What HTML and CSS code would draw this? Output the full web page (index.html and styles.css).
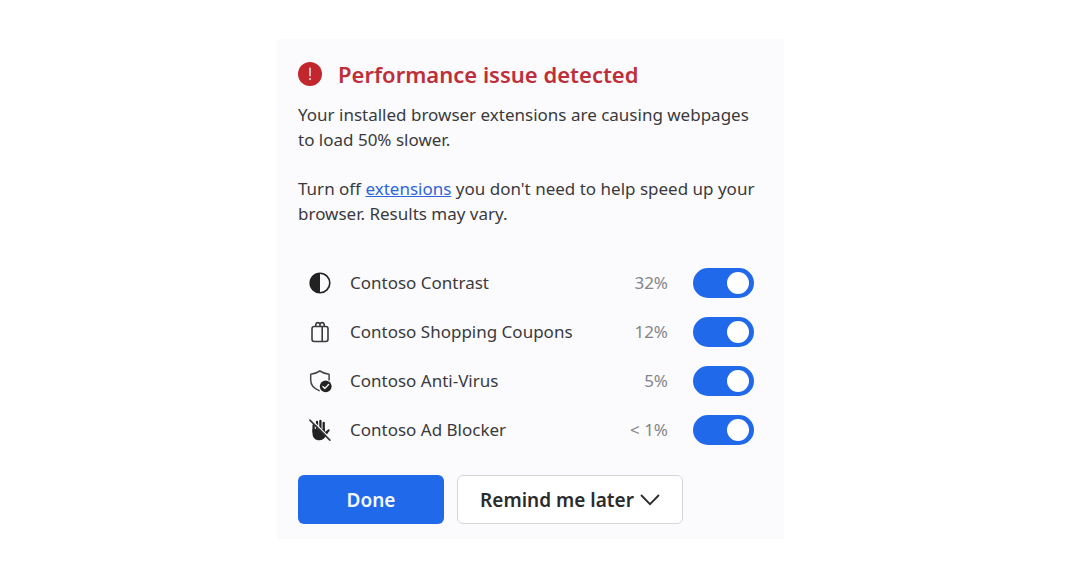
FILE: index.html
```html
<!DOCTYPE html>
<html lang="en">
<head>
<meta charset="utf-8">
<meta name="viewport" content="width=device-width, initial-scale=1">
<title>Performance issue detected</title>
<link rel="stylesheet" href="styles.css">
</head>
<body>
<main class="card">
  <header class="heading">
    <svg class="alert" viewBox="0 0 24 24" aria-hidden="true"><circle cx="12" cy="12" r="12" fill="#c1272d"/><path d="M12 6.3v7.4" stroke="#fbd9dc" stroke-width="1.6" stroke-linecap="round"/><circle cx="12" cy="17" r="1.1" fill="#fbd9dc"/></svg>
    <h1 class="title">Performance issue detected</h1>
  </header>
  <div class="copy">
    <p class="text">Your installed browser extensions are causing webpages<br>to load 50% slower.</p>
    <p class="text">Turn off <a class="link" href="#extensions">extensions</a> you don't need to help speed up your<br>browser. Results may vary.</p>
  </div>
  <ul class="list" id="extensions">
    <li class="row">
      <svg class="icon" viewBox="0 0 24 24" aria-hidden="true"><circle cx="12" cy="12" r="9.8" fill="none" stroke="#222" stroke-width="1.6"/><path d="M12 2.2a9.8 9.8 0 0 0 0 19.6z" fill="#222"/></svg>
      <label class="name" for="contrast">Contoso Contrast</label>
      <span class="share">32%</span>
      <input class="toggle" type="checkbox" role="switch" id="contrast" checked>
    </li>
    <li class="row">
      <svg class="icon" viewBox="0 0 24 24" fill="none" stroke="#3a3a3a" stroke-width="1.6" aria-hidden="true"><rect x="4" y="6.5" width="16" height="15" rx="2.2"/><path d="M7.8 6.5V4.2a2.2 2.2 0 0 1 4.2 0 2.2 2.2 0 0 1 4.2 0v2.3M12 4v2.5M14.2 6.5v15"/></svg>
      <label class="name" for="coupons">Contoso Shopping Coupons</label>
      <span class="share">12%</span>
      <input class="toggle" type="checkbox" role="switch" id="coupons" checked>
    </li>
    <li class="row">
      <svg class="icon" viewBox="0 0 24 24" aria-hidden="true"><path d="M11.2 21.6C5.8 19.5 2.7 16 2.7 11V5.2C5.8 5.1 8.8 4 11.9 2c3.1 2 6.1 3.1 9.2 3.2V11" fill="none" stroke="#444" stroke-width="1.5" stroke-linecap="round" stroke-linejoin="round"/><circle cx="17.7" cy="17.3" r="5.9" fill="#222"/><path d="m14.9 17.6 1.9 1.8 3.8-3.8" fill="none" stroke="#eee" stroke-width="1.4" stroke-linecap="round" stroke-linejoin="round"/></svg>
      <label class="name" for="antivirus">Contoso Anti-Virus</label>
      <span class="share">5%</span>
      <input class="toggle" type="checkbox" role="switch" id="antivirus" checked>
    </li>
    <li class="row">
      <svg class="icon" viewBox="0 0 24 24" aria-hidden="true"><g fill="none" stroke="#222" stroke-width="2.3" stroke-linecap="round"><path d="M5.6 7.5V14M9 4v9M12.4 2.8V13M15.7 4.8V14"/></g><path d="M4.5 11h12.4v3l3.3-2.6c1-.7 2 .3 1.4 1.2l-4.2 6.2c-1.5 2.2-3.2 3.4-6 3.4-4.5 0-6.9-2.7-6.9-7z" fill="#222"/><path d="m3 1.3 20 20" stroke="#fbfbfe" stroke-width="1.3"/><path d="m1.9 2.1 20 20" stroke="#333" stroke-width="1.6" stroke-linecap="round"/></svg>
      <label class="name" for="adblocker">Contoso Ad Blocker</label>
      <span class="share">&lt; 1%</span>
      <input class="toggle" type="checkbox" role="switch" id="adblocker" checked>
    </li>
  </ul>
  <footer class="actions">
    <button class="button primary" type="button">Done</button>
    <button class="button secondary" type="button">Remind me later
      <svg class="chevron" viewBox="0 0 20 12" aria-hidden="true"><path d="m1.5 1.5 8.5 8.7 8.5-8.7" fill="none" stroke="#2b2b2b" stroke-width="1.8" stroke-linecap="round"/></svg>
    </button>
  </footer>
</main>
</body>
</html>
```
FILE: styles.css
```css
* {
  box-sizing: border-box;
}

body {
  margin: 0;
  padding: 39px 8px 39px 0;
  background: #fff;
  color: #3a3a3c;
  font-family: "Noto Sans", "Open Sans", sans-serif;
  font-size: 17px;
}

.card {
  max-width: 507px;
  margin: 0 auto;
  padding: 20px 20px 15px 21px;
  background: #fbfbfe;
}

.heading {
  display: flex;
  align-items: center;
  gap: 16px;
}

.alert {
  width: 24px;
  height: 24px;
}

.title {
  margin: 0;
  color: #bd303a;
  font-size: 22px;
  font-weight: 600;
  line-height: 30px;
}

.copy {
  display: grid;
  gap: 24px;
  margin-top: 13px;
}

.text {
  margin: 0;
  line-height: 25px;
  white-space: nowrap;
}

.link {
  color: #2e66d9;
}

.list {
  margin: 32px 0 0;
  padding: 0 10px;
  list-style: none;
}

.row {
  display: flex;
  align-items: center;
  height: 49px;
}

.icon {
  width: 24px;
  height: 24px;
  margin-right: 18px;
}

.name {
  flex: 1;
}

.share {
  margin-right: 25px;
  color: #858589;
}

.toggle {
  display: flex;
  align-items: center;
  justify-content: flex-end;
  width: 61px;
  height: 30px;
  margin: 0;
  padding-right: 5px;
  border-radius: 15px;
  background: #2169eb;
  appearance: none;
}

.toggle::before {
  width: 22px;
  height: 22px;
  border-radius: 50%;
  background: #fff;
  content: "";
}

.toggle:not(:checked) {
  justify-content: flex-start;
  padding-left: 5px;
  background: #8a8a8e;
}

.actions {
  display: flex;
  gap: 13px;
  margin-top: 21px;
}

.button {
  display: flex;
  align-items: center;
  justify-content: center;
  gap: 6px;
  height: 49px;
  border: 0;
  border-radius: 6px;
  font-family: inherit;
  font-size: 19px;
  font-weight: 600;
}

.primary {
  width: 146px;
  background: #2169eb;
  color: #f2f8ff;
}

.secondary {
  width: 226px;
  border: 1px solid #d6d6da;
  background: #fff;
  color: #2b2b2d;
}

.chevron {
  width: 20px;
  height: 12px;
}
```
